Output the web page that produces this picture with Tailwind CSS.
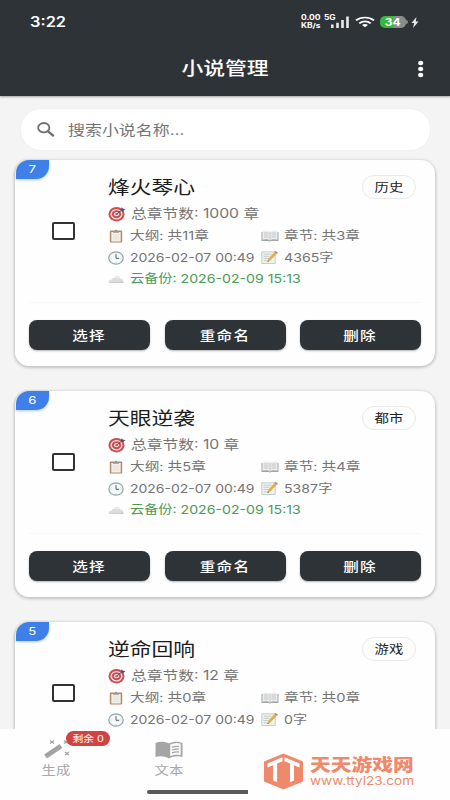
<!DOCTYPE html>
<html lang="zh-CN">
<head>
<meta charset="utf-8">
<title>小说管理</title>
<script src="https://cdn.jsdelivr.net/npm/@tailwindcss/browser@4"></script>
</head>
<body class="h-[800px] w-[450px] overflow-hidden bg-[#f4f4f4] font-['Inter','Noto_Sans_CJK_SC',sans-serif]">
<svg class="hidden">
  <symbol id="target" viewBox="0 0 18 16"><ellipse cx="8.5" cy="8.2" rx="8" ry="7.2" fill="#cf4a4d"/><ellipse cx="8.5" cy="8.2" rx="6" ry="5.3" fill="#f5e4e4"/><ellipse cx="8.5" cy="8.2" rx="4.6" ry="4" fill="#cf4a4d"/><ellipse cx="8.5" cy="8.2" rx="2.6" ry="2.1" fill="#f5e4e4"/><ellipse cx="8.5" cy="8.2" rx="1.3" ry="1" fill="#cf4a4d"/><path d="M8.5 8.2 14 3.8" stroke="#49576a" stroke-width="1"/><path d="m13 4 .5-2.8 1.7 1.5 2.3.2-2.5 2.4z" fill="#49576a"/></symbol>
  <symbol id="clip" viewBox="0 0 14 14"><rect x=".8" y="1.6" width="12.4" height="12" rx=".8" fill="#b78b66"/><path d="M2.3 3h9.4v9.5H2.3z" fill="#f0efe9"/><path d="M4 3.7V2h1.8C6 .3 8 .3 8.2 2H10v1.7z" fill="#96989a"/><path d="M4 6h6M4 8h6M4 10h6" stroke="#d8dad8" stroke-width=".6"/></symbol>
  <symbol id="clock" viewBox="0 0 16 14"><ellipse cx="8" cy="7" rx="7.2" ry="6.2" fill="#f4f8f8" stroke="#92a5aa" stroke-width="1.2"/><path d="M8 3.2V7.3h3.2" fill="none" stroke="#566064" stroke-width="1"/><path d="M8 1.8v.8M8 11.5v.8M2.3 7h1M12.7 7h1" stroke="#9aa9ad" stroke-width=".6"/></symbol>
  <symbol id="cloud" viewBox="0 0 16 10"><path d="M1 9C-.5 7 1.2 5.5 3.6 5.8 4 3.8 5.5 3.8 6 4 7 .6 11.5 1 12 4.5c3-.2 4 2.8 3.2 4.5z" fill="#dcdedd"/><path d="M1 8.8C4 7 10 9.5 15 7l.2 2z" fill="#c6c8c8"/><path d="M6.3 4c1-2.6 4-2.2 5 .6-2-1-3.500-.6-5-.6" fill="#ececec"/></symbol>
  <symbol id="book" viewBox="0 0 18 12"><path d="M.5 2h17v9H10l-1 .8L8 11H.5z" fill="#9fa5a7"/><path d="M1.500 1C4 .2 7 .3 9 1.700 11 .3 14 .2 16.500 1v8.800C14 9 11 9 9 10.500 7 9 4 9 1.500 9.800z" fill="#ededeb"/><path d="M9 1.800v8.600M3 3h4.500M3 5h4.500M3 7h4.500M10.500 3H15M10.500 5H15M10.500 7H15" stroke="#b9bcbc" stroke-width=".8"/></symbol>
  <symbol id="memo" viewBox="0 0 17 13"><path d="M.8.8h13.400v11.700H.8z" fill="#f1f3f1" stroke="#b4c4c4" stroke-width=".8"/><path d="M2.500 3.200h8M2.500 5.300h6M2.500 7.500h5M2.500 9.800h4" stroke="#b4bbbb" stroke-width=".7"/><path d="m6.500 11 .8-3.200L13.500 1l2.500 1.700L9.300 9.600z" fill="#e0b04a"/><path d="m13.500 1 1-.9 2.300 1.600-.8 1z" fill="#c86d68"/><path d="m6.500 11 .4-1.500 1.100.8z" fill="#4b4b4b"/></symbol>
</svg>

<div class="flex h-full flex-col">
  <header class="relative z-10 h-24 shrink-0 bg-[#2e3337] text-white shadow-[0_1px_2px_rgba(0,0,0,0.35)]">
    <div class="flex h-[44px] items-center pl-[30px] pr-[31px]">
      <span class="inline-block w-[260px] origin-left text-[14px] font-semibold leading-none"><span class="inline-block origin-left scale-x-[1.17]">3:22</span></span>
      <div class="ml-[11px] flex w-[20px] shrink-0 flex-col text-[7px] font-bold leading-[8px]"><span class="origin-left scale-x-[1.22] whitespace-nowrap">0.00</span><span class="origin-left scale-x-[1.2] whitespace-nowrap">KB/s</span></div>
      <div class="relative ml-[9px] h-[15px] w-[20px] shrink-0">
        <span class="absolute -left-[6px] -top-px inline-block origin-left scale-x-[1.2] text-[7px] font-bold leading-[8px]">5G</span>
        <svg class="absolute inset-0" width="20" height="15"><path d="M2.300 9.500v3.500M7.500 7.800v5.200M12.500 5v8M17.500 1.500V13" stroke="#e9ebeb" stroke-width="2.600"/></svg>
      </div>
      <svg class="ml-[5px] shrink-0" width="20" height="12" viewBox="0 0 20 14" preserveAspectRatio="none" fill="none" stroke="#fff" stroke-width="2"><path d="M1 5.200C6 .6 14 .6 19 5.200M4.300 8.500c3.300-3 8-3 11.400 0"/><path d="M10 13.200 7 10.600c1.800-1.600 4.200-1.600 6 0z" fill="#fff" stroke="none"/></svg>
      <div class="ml-[5px] flex h-[12px] w-[26px] shrink-0 items-center justify-center rounded-[5px] bg-linear-to-r from-[#35b73c] from-50% to-[#8a8d8e] to-50% text-[10px] font-bold leading-none"><span class="scale-x-[1.2]">34</span></div>
      <div class="h-[4px] w-[2px] shrink-0 rounded-r bg-[#8a8d8e]"></div>
      <svg class="ml-[3px] shrink-0" width="8" height="11" viewBox="0 0 8 12" preserveAspectRatio="none"><path d="M5.500 0 .5 6.500h2.700L2 12l5.500-7H4.700z" fill="#e9ebeb"/></svg>
    </div>
    <div class="relative flex h-[50px] items-center justify-center">
      <h1 class="scale-x-[1.21] whitespace-nowrap text-[18px] font-medium leading-[26px]">小说管理</h1>
      <svg class="absolute left-[417px] top-[16px]" width="8" height="18" fill="#fff"><ellipse cx="3.700" cy="3" rx="2.600" ry="2.200"/><ellipse cx="3.700" cy="9" rx="2.600" ry="2.200"/><ellipse cx="3.700" cy="15" rx="2.600" ry="2.200"/></svg>
    </div>
  </header>

  <div class="mx-auto mt-[13px] flex h-[41px] w-[409px] shrink-0 items-center rounded-[20px] bg-white pl-[16px] shadow-[0_0_2px_rgba(0,0,0,0.05)]">
    <svg width="18" height="15" viewBox="0 0 18 15" fill="none" stroke="#6d6d6d"><ellipse cx="6.800" cy="5.700" rx="5.600" ry="4.700" stroke-width="1.800"/><path d="m10.800 9.200 6 5" stroke-width="2.200"/></svg>
    <span class="ml-[13px] inline-block origin-left scale-x-[1.21] whitespace-nowrap text-[14px] leading-none text-[#757575]">搜索小说名称...</span>
  </div>

  <main id="list" class="flex min-h-0 flex-1 flex-col gap-[25px] overflow-hidden px-[15px] pt-[10px]"></main>

  <nav class="relative h-[71px] shrink-0 bg-[#fefefe]">
    <div class="flex">
      <div class="relative flex w-[113px] flex-col items-center pt-[10px]">
        <svg width="28" height="20" viewBox="0 0 28 20" stroke="#a3a3a3" fill="none"><path d="M2.500 17.500 18 7" stroke-width="5"/><path d="m7 1.500 4 3m0-3-4 3M22 13l4 3m0-3-4 3M21 1.500l4 3m0-3-4 3" stroke-width="1.300"/></svg>
        <span class="mt-[3px] scale-x-[1.2] text-[12px] leading-[18px] text-[#a8a8a8]">生成</span>
        <span class="absolute left-[66px] top-[2px] flex h-[15px] w-[44px] items-center justify-center rounded-full bg-[#d14343] text-white"><span class="scale-x-[1.2] whitespace-nowrap text-[9px] leading-[14px]">剩余 0</span></span>
      </div>
      <div class="flex w-[112px] flex-col items-center pt-[12px]">
        <svg width="28" height="18" viewBox="0 0 28 18"><path d="M.5 2C5 0 10 .4 14 2.400 18 .4 23 0 27.500 2v14C23 14.500 18 15 14 17.500 10 15 5 14.500.5 16z" fill="#a5a5a5"/><path d="M15.200 3.600c3.500-1.700 7-2 10.500-1v11.700c-3.500-.8-7-.5-10.500 1z" fill="#fafafa"/><path d="M17 6.200c2.500-.9 4.500-1.100 7-.8M17 9c2.500-.9 4.500-1.100 7-.8M17 11.800c2.500-.9 4.500-1.100 7-.8" stroke="#a5a5a5" stroke-width="1.300" fill="none"/></svg>
        <span class="mt-[3px] scale-x-[1.2] text-[12px] leading-[18px] text-[#a8a8a8]">文本</span>
      </div>
    </div>
    <div class="absolute left-[147px] top-[61px] h-[4px] w-[101px] rounded-l-full bg-[#5c5959]"></div>
    <div class="absolute left-[263px] top-[24px] flex text-[#ee8a6b]">
      <svg width="41" height="37" viewBox="0 0 41 37"><path d="M20.500.5 40 8.500v20l-19.500 8L1 28.500v-20z" fill="#ee8a6b"/><path d="m4.500 10.600 15-6.300v4l-5.400 2.200v18.800l-4-1.700V12.200l-5.600 2.300zM21.500 4.300l15 6.300v4L31 12.200v15.400l-4 1.700V10.500l-5.500-2.200z" fill="#fff"/><path d="M20.500 9v23" stroke="#ee8a6b" stroke-width="1.200"/></svg>
      <div class="ml-[6px] flex flex-col items-start">
        <span class="mt-[3px] origin-left scale-x-[1.22] whitespace-nowrap text-[17px] font-black leading-[18px]">天天游戏网</span>
        <span class="origin-left scale-x-[1.18] whitespace-nowrap text-[11.500px] leading-[14px]">www.ttyl23.com</span>
      </div>
    </div>
  </nav>
</div>

<script>
const novels = [
  { n: 7, title: '烽火琴心', tag: '历史', total: 1000, outline: 11, chapters: 3, words: 4365 },
  { n: 6, title: '天眼逆袭', tag: '都市', total: 10, outline: 5, chapters: 4, words: 5387 },
  { n: 5, title: '逆命回响', tag: '游戏', total: 12, outline: 0, chapters: 0, words: 0 },
];
const button = label => `<button class="flex h-[30px] items-center justify-center rounded-[8px] bg-[#2d3337] text-white shadow-[0_1px_2px_rgba(0,0,0,0.3)]"><span class="-mt-px scale-x-[1.2] whitespace-nowrap text-[13px] font-medium leading-[20px] tracking-[1px]">${label}</span></button>`;
document.getElementById('list').innerHTML = novels.map((b, i) => `
  <article class="relative h-[206px] shrink-0 rounded-[14px] bg-[#fefefe] shadow-[0_1px_3px_1px_rgba(0,0,0,0.2)]">
    <span class="absolute left-px top-0 flex h-[19px] w-[33px] items-center justify-center rounded-br-[13px] rounded-tl-[13px] bg-[#3f7fe8] text-[11px] leading-none text-white shadow-[0_1px_3px_rgba(60,120,230,0.4)]"><span class="scale-x-[1.2]">${b.n}</span></span>
    <div class="flex h-[142px] border-b border-transparent">
      <div class="w-[93px] shrink-0 pl-[37px] pt-[62px]"><div class="h-[18px] w-[23px] rounded-[2px] border-2 border-[#333]"></div></div>
      <div class="flex w-[327px] flex-col pt-[15px] text-[#757575]">
        <div class="flex h-[24px] items-center justify-between pr-[19px]">
          <h2 class="mt-px origin-left scale-x-[1.21] whitespace-nowrap text-[18px] leading-none text-[#1c1c1c]">${b.title}</h2>
          <span class="flex h-[24px] w-[54px] items-center justify-center rounded-full border border-[#e9e9e9] text-[12px] text-[#222]"><span class="mt-px scale-x-[1.2] leading-none">${b.tag}</span></span>
        </div>
        <div class="mt-[4px] flex h-[21px] items-center"><svg class="w-[18px]" height="16"><use href="#target"/></svg><span class="ml-[5px] origin-left scale-x-[1.21] whitespace-nowrap text-[13px] leading-none">总章节数: ${b.total} 章</span></div>
        <div class="grid h-[23px] grid-cols-[153px_1fr]">
          <div class="flex items-center"><svg class="ml-px w-[14px]" height="14"><use href="#clip"/></svg><span class="ml-[7px] mt-px origin-left scale-x-[1.22] whitespace-nowrap text-[12px] leading-none">大纲: 共${b.outline}章</span></div>
          <div class="flex items-center"><svg class="w-[18px]" height="12"><use href="#book"/></svg><span class="ml-[5px] mt-px origin-left scale-x-[1.22] whitespace-nowrap text-[12px] leading-none">章节: 共${b.chapters}章</span></div>
        </div>
        <div class="grid h-[21px] grid-cols-[153px_1fr]">
          <div class="flex items-center"><svg class="w-[16px]" height="14"><use href="#clock"/></svg><span class="ml-[6px] origin-left scale-x-[1.165] whitespace-nowrap text-[12px] leading-none">2026-02-07 00:49</span></div>
          <div class="flex items-center"><svg class="w-[17px]" height="13"><use href="#memo"/></svg><span class="ml-[6px] origin-left scale-x-[1.18] whitespace-nowrap text-[12px] leading-none">${b.words}字</span></div>
        </div>
        ${i < 2 ? `<div class="flex h-[22px] items-center text-[#4b9a55]"><svg class="w-[16px]" height="10"><use href="#cloud"/></svg><span class="ml-[6px] origin-left scale-x-[1.18] whitespace-nowrap text-[12px] leading-none">云备份: 2026-02-09 15:13</span></div>` : ''}
      </div>
    </div>
    ${i < 2 ? `<div class="mx-[14px] h-px bg-[#f7f7f7]"></div>
    <div class="grid grid-cols-3 gap-[14.500px] px-[14px] pt-[17px]">${button('选择')}${button('重命名')}${button('删除')}</div>` : ''}
  </article>`).join('');
</script>
</body>
</html>
